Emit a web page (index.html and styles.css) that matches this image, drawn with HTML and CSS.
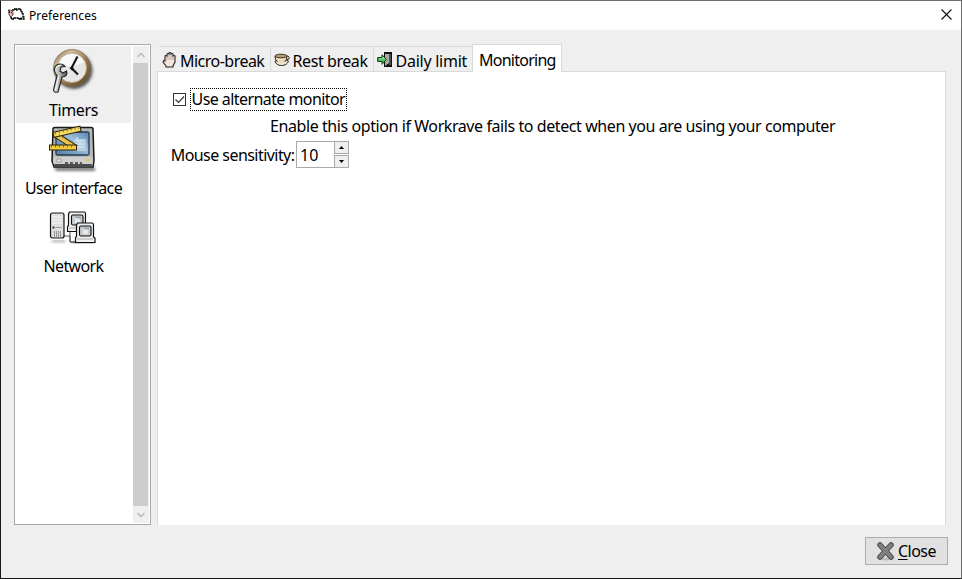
FILE: index.html
```html
<!DOCTYPE html>
<html lang="en">
<head>
<meta charset="utf-8">
<title>Preferences</title>
<link rel="stylesheet" href="styles.css">
</head>
<body>
<div class="window">
  <header class="titlebar">
    <svg class="sheep" width="17" height="14" viewBox="0 0 17 14"><path d="M4 2h2V1h2v1h1V1h3v1h1v1h1v2h1v4h1v2h-3v-1h-1v1h-2v-1H6v1H4v-1H3V8" fill="#fff" stroke="#000" stroke-width="1.300" stroke-dasharray="2.500 .5"/><path d="M.500 2h2.500l2 2v3L3 9 1 7z" fill="#e6aaa8" stroke="#222" stroke-dasharray="1.500 .7"/><path d="M1 3h1v2H1zM3 4h1v1H3z" fill="#111"/></svg>
    <span class="title">Preferences</span>
    <svg class="dismiss" width="11" height="11" viewBox="0 0 11 11"><path d="M.5.5l10 10M10.5.5l-10 10" stroke="#111" stroke-width="1.1"/></svg>
  </header>
  <main class="content">
    <nav class="sidebar">
      <div class="items">
        <div class="item selected">
          <svg width="48" height="48" viewBox="0 0 48 48">
            <defs>
              <linearGradient id="brass" x1="0" y1="0" x2="1" y2="1"><stop offset="0" stop-color="#655039"/><stop offset=".25" stop-color="#d3bd98"/><stop offset=".6" stop-color="#917247"/><stop offset="1" stop-color="#57422a"/></linearGradient>
              <linearGradient id="steel"><stop offset="0" stop-color="#eee"/><stop offset=".5" stop-color="#aaa"/><stop offset="1" stop-color="#555"/></linearGradient>
              <filter id="soft" x="-30%" y="-30%" width="160%" height="160%"><feGaussianBlur stdDeviation="1.5"/></filter>
            </defs>
            <circle cx="25" cy="23.500" r="18.500" fill="#222" opacity=".75" filter="url(#soft)"/>
            <circle cx="23" cy="21" r="18.500" fill="url(#brass)" stroke="#76654f" stroke-width=".7"/>
            <circle cx="22.800" cy="20.800" r="14.700" fill="#e6e6e4" stroke="#b9a78c"/>
            <path d="M10 18a13 13 0 0 1 25-3q-9 6-25 3" fill="#fff" opacity=".7"/>
            <path d="M28.500 9.500L22.500 21l6.500 6.500" fill="none" stroke="#151515" stroke-width="2.100"/>
            <path d="M20.500 21l3-2 1 2-1 3z" fill="#111"/>
            <path d="M8.500 17.500c-3.500 2-4 6-2 9l1.500 2L4.500 43q.5 3 4.500 2l4-15c4 0 6-3 4.500-6l-3.500 2-3-2 1-4 4-.5c-1-2-5-3-7.500-2z" fill="url(#steel)" stroke="#252525" stroke-width="1.200"/>
            <path d="M10 28L6.500 43M7.500 21q1-3 5-3" fill="none" stroke="#f5f5f5" stroke-width="1.100"/>
          </svg>
          <span class="label">Timers</span>
        </div>
        <div class="item display">
          <svg width="48" height="48" viewBox="0 0 48 48">
            <defs><linearGradient id="screen" x1="0" y1="1" x2="1" y2="0"><stop offset="0" stop-color="#527ba4"/><stop offset=".6" stop-color="#9dbfdf"/><stop offset="1" stop-color="#5582b0"/></linearGradient></defs>
            <path d="M5 41h41v4H7z" fill="#222" opacity=".6" filter="url(#soft)"/>
            <path d="M4 3q0-1.500 2-1.500h36q2 0 2 1.500l1 32-1 6H5l-2-6z" fill="#b7b7b5" stroke="#181818" stroke-width="1.500"/>
            <path d="M5 31h38l1 5-1 3H5l-1-3z" fill="#cecece"/>
            <path d="M5 38h38l-1 3H6z" fill="#4b4b4b"/>
            <rect x="7" y="6" width="33" height="23" rx="1.500" fill="url(#screen)" stroke="#253b52" stroke-width="1.300"/>
            <path d="M25 13h12v12H25z" fill="#b7cee2"/><path d="M28 11v4h6M27 18h8M27 21h8" fill="none" stroke="#e1edf6"/>
            <path d="M8 33h4v3H8z" fill="#eee" stroke="#777" stroke-width=".6"/><path d="M37 34h4" stroke="#e3c64f" stroke-width="2"/>
            <path d="M16 37h3m2 0h3m2 0h3m2 0h2" stroke="#333" stroke-width="1.500"/>
            <path d="M7 9l20 13" stroke="#292209" stroke-width="6"/><path d="M7 9l20 13" stroke="#ebc64d" stroke-width="4"/>
            <path d="M4 9L32 2.500" stroke="#292209" stroke-width="6"/><path d="M5 8.700L31 2.700" stroke="#f4da62" stroke-width="4"/>
            <path d="M0 21.500h28" stroke="#292209" stroke-width="6"/><path d="M1 21.500h26" stroke="#f3cb43" stroke-width="4"/>
            <path d="M2 20.500h24M6 7.500l24-5.500M10 9l14 9" stroke="#705a1e" stroke-width="1.300" stroke-dasharray="1 3"/>
          </svg>
          <span class="label">User interface</span>
        </div>
        <div class="item network">
          <svg width="48" height="48" viewBox="0 0 48 48">
            <path d="M3 38h13m7 2h22" stroke="#777" stroke-width="1.500" filter="url(#soft)"/>
            <path d="M15 33h6v6h5M21 29v10h7" fill="none" stroke="#555"/>
            <rect x="1.500" y="10" width="13.500" height="25" rx="2" fill="#dedede" stroke="#151515" stroke-width="1.200"/>
            <path d="M3 14h10M3 17h10M3 20h10" stroke="#f7f7f7"/><path d="M5.500 28v6m2-6v6m2-6v6m2-6v6" stroke="#777" stroke-width=".7"/><circle cx="4.500" cy="24.500" r="1.200" fill="#555"/><path d="M6.500 24.500h6" stroke="#999"/>
            <g id="monitor"><path d="M20.500 9h15q1 0 1 2v12l1.500 1v4.500H18.500v-4.500l1-2V11z" fill="#efefef" stroke="#101010" stroke-width="1.200"/><rect x="22.500" y="12" width="11.500" height="10" rx="1.500" fill="#c8cccf" stroke="#111" stroke-width="1.100"/><path d="M26 15h5v5h-5z" fill="#e4e9ed"/><path d="M26 14h6m-3 0v2m2-2v2" stroke="#8d969b" stroke-width=".8"/><path d="M20 25h16" stroke="#aaa"/></g>
            <use href="#monitor" x="8" y="11"/>
          </svg>
          <span class="label">Network</span>
        </div>
      </div>
      <div class="scrollbar">
        <svg width="16" height="17" viewBox="0 0 16 17"><path d="M4.500 11L8 7.500l3.500 3.500" fill="none" stroke="#bdbdbd" stroke-width="1.700"/></svg>
        <div class="thumb"></div>
        <svg width="16" height="17" viewBox="0 0 16 17"><path d="M4.500 7L8 10.500 11.500 7" fill="none" stroke="#bdbdbd" stroke-width="1.700"/></svg>
      </div>
    </nav>
    <section class="notebook">
      <div class="tabs">
        <div class="tab micro">
          <svg width="16" height="16" viewBox="0 0 16 16"><path d="M5 14L2 10q0-2 2-1V4q1-1 2 0V2q1-1 2 0V1q1-1 2 0v1q1-1 2 0v2q1-1 2 0v6l-2 4v1H5z" fill="#f3e4dc" stroke="#222" stroke-width="1.100"/><path d="M6 4v4M8 2v6M10 2v6M12 4v4" stroke="#a69085" stroke-width=".7"/></svg>
          <span>Micro-break</span>
        </div>
        <div class="tab rest">
          <svg width="16" height="16" viewBox="0 0 16 16"><path d="M1 9q1 4.500 6.500 4.500T14.500 9l-2-1H3z" fill="#efe3cd" stroke="#302b23"/><path d="M12 4h2q2 1 1 3l-3 1" fill="#eadbc2" stroke="#373128"/><path d="M1 4q0 5.500 3.500 7h5Q13 9.500 13 4z" fill="#eadbc2"/><path d="M1 4q0 4 2.500 6M13 4q0 4-2.500 6" fill="none" stroke="#342c21"/><ellipse cx="7" cy="4" rx="6" ry="1.800" fill="#b39a78" stroke="#423424"/></svg>
          <span>Rest break</span>
        </div>
        <div class="tab daily">
          <svg width="16" height="16" viewBox="0 0 16 16"><path d="M7 0h8v15H7z" fill="#111"/><path d="M8 2h4v9L8 14z" fill="#aaa"/><path d="M12 2h2v11h-2z" fill="#505050"/><path d="M.700 5.500H5V2.700L9.500 7.500 5 12.300V9.500H.700z" fill="#48b557" stroke="#123d18"/><path d="M2 7h4V5l2 2.500" fill="none" stroke="#a4e6a4"/></svg>
          <span>Daily limit</span>
        </div>
        <div class="tab active"><span>Monitoring</span></div>
      </div>
      <div class="page">
        <label class="check">
          <svg width="13" height="13" viewBox="0 0 13 13"><rect x=".5" y=".5" width="12" height="12" fill="#fff" stroke="#333"/><path d="M2.500 6.500l3 3 5.500-6" fill="none" stroke="#333" stroke-width="1.200"/></svg>
          <span class="focus"><span>Use alternate monitor</span></span>
        </label>
        <p class="hint">Enable this option if Workrave fails to detect when you are using your computer</p>
        <div class="sensitivity">
          <span class="caption">Mouse sensitivity:</span>
          <div class="spin">
            <span class="value">10</span>
            <div class="steps">
              <i><svg width="5" height="3" viewBox="0 0 5 3"><path d="M0 3L2.500 0 5 3z"/></svg></i>
              <i><svg width="5" height="3" viewBox="0 0 5 3"><path d="M0 0h5L2.500 3z"/></svg></i>
            </div>
          </div>
        </div>
      </div>
    </section>
  </main>
  <footer class="actions">
    <button class="close">
      <svg width="20" height="20" viewBox="0 0 20 20"><ellipse cx="10" cy="18" rx="7" ry="1.500" fill="#bbb"/><path d="M4 4l11 12M15 4L4 16" stroke="#454745" stroke-width="5.500" stroke-linecap="round"/><path d="M4 4l11 12M15 4L4 16" stroke="#7e807d" stroke-width="3.700" stroke-linecap="round"/></svg>
      <span><u>C</u>lose</span>
    </button>
  </footer>
</div>
</body>
</html>
```

FILE: styles.css
```css
* { box-sizing: border-box; }
body { margin: 0; font: 16px/20px "Noto Sans", "Open Sans", sans-serif; color: #000; letter-spacing: -.42px; }
svg { display: block; flex: none; overflow: visible; }
.window { width: 962px; height: 579px; background: #efefef; border: 1px solid #18181b; border-top-color: #6e6e6e; border-right-color: #6e6e6e; display: flex; flex-direction: column; overflow: hidden; }
.titlebar { height: 29px; background: #fff; display: flex; align-items: center; padding: 0 9px 0 7px; flex: none; }
.sheep { margin-top: -2px; }
.title { font-size: 12px; letter-spacing: .1px; margin-left: 4px; flex: 1; }
.dismiss { margin-top: -2px; }
.content { display: flex; height: 481px; margin: 14px 15px 0 13px; flex: none; }
.sidebar { width: 137px; border: 1px solid #a9a8b0; background: #fff; padding: 1px; display: flex; justify-content: space-between; }
.items { width: 115px; }
.item { height: 78px; display: flex; flex-direction: column; align-items: center; padding-top: 2px; letter-spacing: -.62px; }
.item.selected { background: #efefef; height: 77px; padding-top: 1px; letter-spacing: -.4px; }
.item svg { margin: 0 2px 5px 0; }
.item.display svg { margin: 1px 1px 4px 0; }
.label { white-space: nowrap; }
.scrollbar { width: 16px; display: flex; flex-direction: column; background: #efefef; }
.thumb { flex: 1; background: #cdcdcd; width: 15px; }
.notebook { flex: 1; margin-left: 6px; display: flex; flex-direction: column; }
.tabs { display: flex; height: 28px; align-items: flex-end; padding-left: 2px; z-index: 1; margin-bottom: -1px; }
.tab { height: 26px; border-top: 1px solid #d9d9d9; border-right: 1px solid #d9d9d9; display: flex; align-items: center; border-bottom: 1px solid #d9d9d9; padding: 2px 0 0 3px; gap: 2.5px; white-space: nowrap; }
.tab:not(.active) span { padding-top: 2px; }
.micro { width: 112px; padding-left: 2px; gap: 3px; letter-spacing: -.52px; }
.rest { width: 103px; }
.daily { width: 98px; border-right: 0; letter-spacing: -.25px; }
.active { width: 90px; height: 28px; background: #fff; border-left: 1px solid #d9d9d9; border-bottom: 0; padding: 3px 0 0 6px; letter-spacing: -.75px; }
.page { flex: 1; background: #fff; border: 1px solid #d9d9d9; border-bottom: 0; padding: 15px 0 0 13px; }
.check { display: flex; align-items: center; height: 24px; padding-left: 2px; gap: 4px; letter-spacing: -.57px; }
.focus { width: 157px; height: 23px; border: 1px dotted #000; padding-left: .5px; white-space: nowrap; }
.hint { margin: 5px 0 5px 99px; height: 20px; white-space: nowrap; }
.sensitivity { display: flex; height: 27px; align-items: center; margin-left: -1px; }
.caption { width: 126px; padding-left: .7px; white-space: nowrap; letter-spacing: -.55px; }
.spin { width: 53px; height: 27px; display: flex; justify-content: space-between; border: 1px solid #aaa; border-right: 0; }
.value { padding: 3px 0 0 3px; letter-spacing: 0; }
.steps { display: flex; flex-direction: column; width: 15px; margin: -1px 0; }
.steps i { height: 13px; background: #efefef; border: 1px solid #aaa; display: flex; align-items: center; justify-content: center; }
.steps i + i { margin-top: 1px; }
.actions { display: flex; justify-content: flex-end; padding: 12px 13px 0 0; }
.close { width: 83px; height: 28px; background: #e1e1e1; border: 1px solid #adadad; padding: 0 0 0 10px; display: flex; align-items: center; gap: 2px; font: inherit; letter-spacing: -.55px; color: #000; }
.close u { text-underline-offset: 2px; }
```
